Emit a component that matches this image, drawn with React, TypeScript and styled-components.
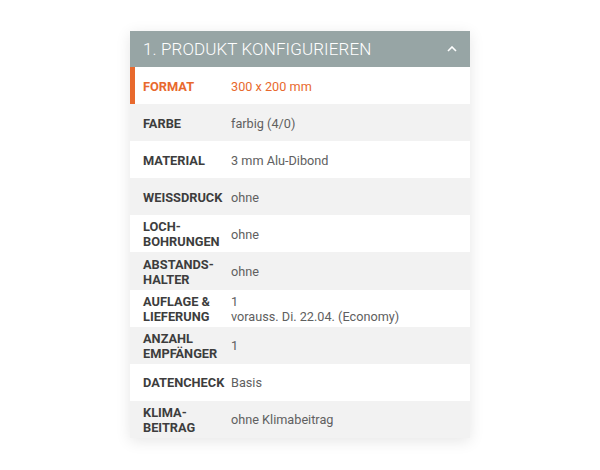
import React from "react";
import styled, { createGlobalStyle } from "styled-components";

const Global = createGlobalStyle`
  html, body { margin: 0; padding: 0; background: #ffffff; }
  body { font-family: Roboto, "Noto Sans", sans-serif; }
`;

const Page = styled.div`
  width: 600px;
  height: 470px;
  padding-top: 31px;
  box-sizing: border-box;
  display: flex;
  justify-content: center;
`;

const Panel = styled.div`
  width: 340px;
  align-self: flex-start;
  background: #fff;
  box-shadow: 0 3px 14px rgba(0, 0, 0, 0.1);
`;

const Header = styled.div`
  height: 36px;
  background: #97a5a5;
  display: flex;
  align-items: center;
  justify-content: space-between;
  padding: 0 13px;
  color: #fff;
  font-size: 17px;
  font-weight: 300;
  letter-spacing: 0.1px;
`;

const Row = styled.div<{ $alt?: boolean; $active?: boolean }>`
  height: 37.1px;
  display: flex;
  align-items: center;
  padding-left: 13px;
  padding-top: 1px;
  box-sizing: border-box;
  background: ${(p) => (p.$alt ? "#f2f2f2" : "#ffffff")};
  box-shadow: ${(p) => (p.$active ? "inset 5px 0 0 #e8692d" : "none")};
`;

const Label = styled.div<{ $active?: boolean }>`
  width: 88px;
  flex-shrink: 0;
  font-size: 12.8px;
  font-weight: 700;
  line-height: 15px;
  text-transform: uppercase;
  color: ${(p) => (p.$active ? "#e8692d" : "#3d3d3d")};
`;

const Value = styled.div<{ $active?: boolean }>`
  font-size: 12.7px;
  line-height: 15px;
  color: ${(p) => (p.$active ? "#e8692d" : "#606060")};
`;

const Chevron = () => (
  <svg width="10" height="6" viewBox="0 0 10 6" fill="none">
    <path d="M1 5 L5 1 L9 5" stroke="#fff" strokeWidth="1.6" />
  </svg>
);

const rows: { label: React.ReactNode; value: React.ReactNode }[] = [
  { label: "Format", value: "300 x 200 mm" },
  { label: "Farbe", value: "farbig (4/0)" },
  { label: "Material", value: "3 mm Alu-Dibond" },
  { label: "Weissdruck", value: "ohne" },
  { label: <>Loch-<br />bohrungen</>, value: "ohne" },
  { label: <>Abstands-<br />halter</>, value: "ohne" },
  { label: <>Auflage &amp;<br />Lieferung</>, value: <>1<br />vorauss. Di. 22.04. (Economy)</> },
  { label: <>Anzahl<br />Empfänger</>, value: "1" },
  { label: "Datencheck", value: "Basis" },
  { label: <>Klima-<br />beitrag</>, value: "ohne Klimabeitrag" },
];

export default function App() {
  return (
    <>
      <Global />
      <Page>
        <Panel>
          <Header>
            <span>1. PRODUKT KONFIGURIEREN</span>
            <Chevron />
          </Header>
          {rows.map((r, i) => (
            <Row key={i} $alt={i % 2 === 1} $active={i === 0}>
              <Label $active={i === 0}>{r.label}</Label>
              <Value $active={i === 0}>{r.value}</Value>
            </Row>
          ))}
        </Panel>
      </Page>
    </>
  );
}
